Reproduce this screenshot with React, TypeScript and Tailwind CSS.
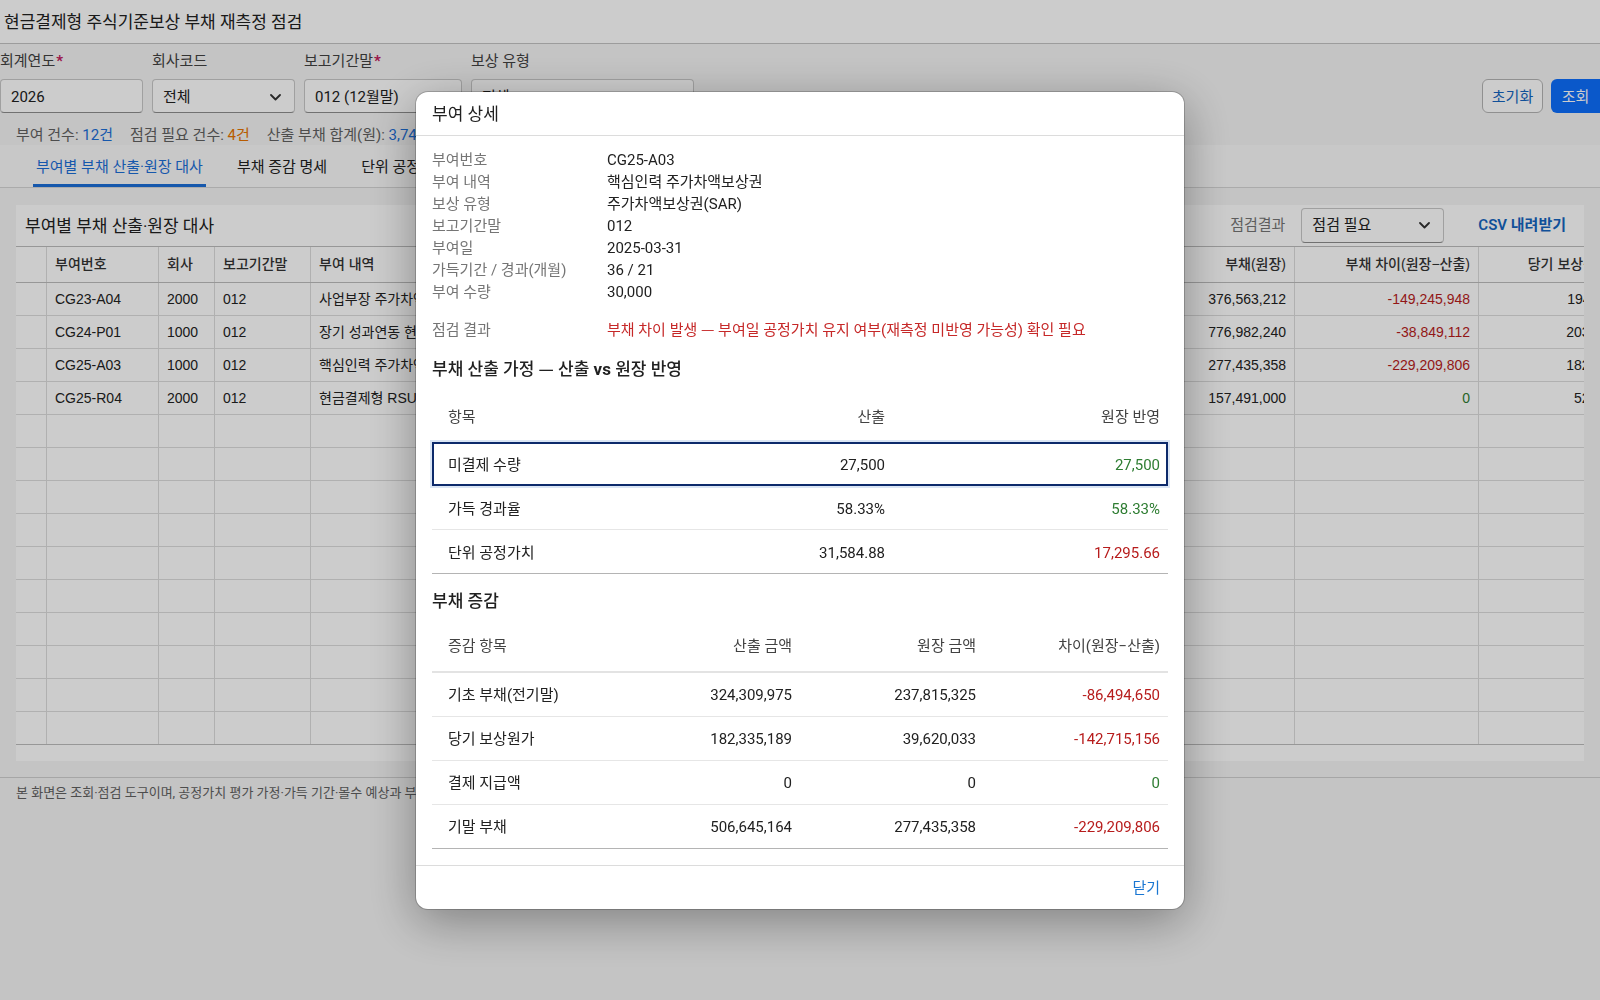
import type { ReactNode } from "react";

const gridCols =
  "grid w-[1637px] grid-cols-[31px_112px_56px_96px_220px_120px_100px_100px_130px_150px_164px_184px_174px]";

type GrantRow = {
  id: string;
  company: string;
  period: string;
  desc: string;
  type: string;
  grantDate: string;
  qty: string;
  fv: string;
  calc: string;
  ledger: string;
  diff: string;
  cost: string;
};

const grants: GrantRow[] = [
  {
    id: "CG23-A04",
    company: "2000",
    period: "012",
    desc: "사업부장 주가차액보상권",
    type: "SAR",
    grantDate: "2023-04-01",
    qty: "18,000",
    fv: "29,211.62",
    calc: "525,809,160",
    ledger: "376,563,212",
    diff: "-149,245,948",
    cost: "194,118,552",
  },
  {
    id: "CG24-P01",
    company: "1000",
    period: "012",
    desc: "장기 성과연동 현금보상",
    type: "PSU",
    grantDate: "2024-03-29",
    qty: "42,000",
    fv: "19,424.97",
    calc: "815,831,352",
    ledger: "776,982,240",
    diff: "-38,849,112",
    cost: "203,447,810",
  },
  {
    id: "CG25-A03",
    company: "1000",
    period: "012",
    desc: "핵심인력 주가차액보상권",
    type: "SAR",
    grantDate: "2025-03-31",
    qty: "27,500",
    fv: "31,584.88",
    calc: "506,645,164",
    ledger: "277,435,358",
    diff: "-229,209,806",
    cost: "182,335,189",
  },
  {
    id: "CG25-R04",
    company: "2000",
    period: "012",
    desc: "현금결제형 RSU",
    type: "RSU",
    grantDate: "2025-06-30",
    qty: "12,500",
    fv: "12,599.28",
    calc: "157,491,000",
    ledger: "157,491,000",
    diff: "0",
    cost: "52,497,000",
  },
];

function Chevron() {
  return (
    <svg width="11" height="7" viewBox="0 0 11 7" fill="none" className="shrink-0">
      <path d="M1 1l4.5 4.5L10 1" stroke="#333" strokeWidth="1.8" strokeLinecap="round" strokeLinejoin="round" />
    </svg>
  );
}

function Dash() {
  return <span className="font-[family-name:'Noto_Sans_CJK_KR',sans-serif] leading-[0]">—</span>;
}

function Field({ label, required, children }: { label: string; required?: boolean; children: ReactNode }) {
  return (
    <div className="flex flex-col">
      <div className="mb-2 text-[15px] leading-5 text-[#424242]">
        {label}
        {required ? <span className="ml-px font-bold text-[#c2185b]">*</span> : null}
      </div>
      {children}
    </div>
  );
}

function Box({ className, value, select }: { className: string; value: string; select?: boolean }) {
  return (
    <div
      className={`flex h-[34px] items-center justify-between rounded border border-[#c9c9c9] border-b-[#8e8e8e] bg-white pl-2.5 pr-[13px] pt-[2px] text-[15px] text-[#212121] ${className}`}
    >
      <span>{value}</span>
      {select ? <Chevron /> : null}
    </div>
  );
}

function Cell({ children, right, className = "" }: { children?: ReactNode; right?: boolean; className?: string }) {
  return (
    <div
      className={`flex items-center overflow-hidden whitespace-nowrap border-r border-[#dcdcdc] px-2 ${right ? "justify-end" : ""} ${className}`}
    >
      {children}
    </div>
  );
}

function diffColor(v: string) {
  return v === "0" ? "text-[#2e7d32]" : "text-[#b71c1c]";
}

function GrantGrid() {
  const empty = Array.from({ length: 10 });
  return (
    <div className="overflow-hidden font-[family-name:'Liberation_Sans','Noto_Sans_CJK_KR',sans-serif]">
      <div className={`${gridCols} h-[36px] border-b border-[#bdbdbd] text-[14px] font-medium text-[#333]`}>
        <Cell />
        <Cell>부여번호</Cell>
        <Cell>회사</Cell>
        <Cell>보고기간말</Cell>
        <Cell>부여 내역</Cell>
        <Cell>보상 유형</Cell>
        <Cell>부여일</Cell>
        <Cell right>미결제 수량</Cell>
        <Cell right>단위 공정가치</Cell>
        <Cell right>부채(산출)</Cell>
        <Cell right>부채(원장)</Cell>
        <Cell right>부채 차이(원장−산출)</Cell>
        <Cell right>당기 보상원가(산출)</Cell>
      </div>
      {grants.map((g) => (
        <div key={g.id} className={`${gridCols} h-[33px] border-b border-[#dcdcdc] text-[14px] text-[#222]`}>
          <Cell />
          <Cell>{g.id}</Cell>
          <Cell>{g.company}</Cell>
          <Cell>{g.period}</Cell>
          <Cell>{g.desc}</Cell>
          <Cell>{g.type}</Cell>
          <Cell>{g.grantDate}</Cell>
          <Cell right>{g.qty}</Cell>
          <Cell right>{g.fv}</Cell>
          <Cell right>{g.calc}</Cell>
          <Cell right>{g.ledger}</Cell>
          <Cell right className={diffColor(g.diff)}>
            {g.diff}
          </Cell>
          <Cell right>{g.cost}</Cell>
        </div>
      ))}
      {empty.map((_, i) => (
        <div
          key={i}
          className={`${gridCols} h-[33px] border-b ${i === empty.length - 1 ? "border-[#bdbdbd]" : "border-[#dcdcdc]"}`}
        >
          {Array.from({ length: 13 }).map((__, j) => (
            <Cell key={j} />
          ))}
        </div>
      ))}
    </div>
  );
}

const details: [string, string][] = [
  ["부여번호", "CG25-A03"],
  ["부여 내역", "핵심인력 주가차액보상권"],
  ["보상 유형", "주가차액보상권(SAR)"],
  ["보고기간말", "012"],
  ["부여일", "2025-03-31"],
  ["가득기간 / 경과(개월)", "36 / 21"],
  ["부여 수량", "30,000"],
];

const assumptions = [
  { item: "미결제 수량", calc: "27,500", ledger: "27,500", ok: true },
  { item: "가득 경과율", calc: "58.33%", ledger: "58.33%", ok: true },
  { item: "단위 공정가치", calc: "31,584.88", ledger: "17,295.66", ok: false },
];

const movements = [
  { item: "기초 부채(전기말)", calc: "324,309,975", ledger: "237,815,325", diff: "-86,494,650" },
  { item: "당기 보상원가", calc: "182,335,189", ledger: "39,620,033", diff: "-142,715,156" },
  { item: "결제 지급액", calc: "0", ledger: "0", diff: "0" },
  { item: "기말 부채", calc: "506,645,164", ledger: "277,435,358", diff: "-229,209,806" },
];

function GrantDialog() {
  return (
    <div className="fixed inset-0 flex items-center justify-center bg-black/20">
      <div className="flex w-[768px] flex-col overflow-hidden rounded-xl bg-white shadow-[0_12px_48px_rgba(0,0,0,0.35)] ring-1 ring-black/20">
        <div className="flex h-[44px] items-center border-b border-[#dcdcdc] px-4 pt-[4px] text-[17px] text-[#212121]">
          부여 상세
        </div>

        <div className="px-4 pb-4 pt-[13px] text-[15px] text-[#212121]">
          <dl className="grid grid-cols-[175px_1fr] leading-[22px]">
            {details.map(([k, v]) => (
              <div key={k} className="contents">
                <dt className="text-[#757575]">{k}</dt>
                <dd>{v}</dd>
              </div>
            ))}
          </dl>
          <div className="mt-4 grid h-[22px] grid-cols-[175px_1fr] leading-[22px]">
            <span className="text-[#757575]">점검 결과</span>
            <span className="text-[#c62828]">
              부채 차이 발생 <Dash /> 부여일 공정가치 유지 여부(재측정 미반영 가능성) 확인 필요
            </span>
          </div>

          <h3 className="mt-4 h-6 text-[17px] font-medium leading-6">
            부채 산출 가정 <Dash /> 산출 <b className="font-bold">vs</b> 원장 반영
          </h3>
          <div className="mt-[10px]">
            <div className="grid h-[51px] grid-cols-[1fr_240px_275px] items-center border-b-2 border-[#e3e3e3] pt-[4px] text-[#424242]">
              <span className="pl-4">항목</span>
              <span className="pr-2 text-right">산출</span>
              <span className="pr-2 text-right">원장 반영</span>
            </div>
            {assumptions.map((r, i) => (
              <div
                key={r.item}
                className={`grid h-[44px] grid-cols-[1fr_240px_275px] items-center border-b pt-[4px] ${
                  i === assumptions.length - 1 ? "border-[#b4b4b4]" : "border-[#e6e6e6]"
                } ${i === 0 ? "shadow-[0_0_0_2px_#dbe6f5] outline-2 -outline-offset-2 outline-[#0d2a6b]" : ""}`}
              >
                <span className="pl-4">{r.item}</span>
                <span className="pr-2 text-right">{r.calc}</span>
                <span className={`pr-2 text-right ${r.ok ? "text-[#2e7d32]" : "text-[#b71c1c]"}`}>{r.ledger}</span>
              </div>
            ))}
          </div>

          <h3 className="mt-[15px] text-[17px] font-medium leading-6">부채 증감</h3>
          <div className="mt-[9px]">
            <div className="grid h-[51px] grid-cols-4 items-center border-b-2 border-[#e3e3e3] text-[#424242]">
              <span className="pl-4">증감 항목</span>
              <span className="pr-2 text-right">산출 금액</span>
              <span className="pr-2 text-right">원장 금액</span>
              <span className="pr-2 text-right">차이(원장−산출)</span>
            </div>
            {movements.map((r, i) => (
              <div
                key={r.item}
                className={`grid h-[44px] grid-cols-4 items-center border-b pt-[3px] ${
                  i === movements.length - 1 ? "border-[#b4b4b4]" : "border-[#e6e6e6]"
                }`}
              >
                <span className="pl-4">{r.item}</span>
                <span className="pr-2 text-right">{r.calc}</span>
                <span className="pr-2 text-right">{r.ledger}</span>
                <span className={`pr-2 text-right ${diffColor(r.diff)}`}>{r.diff}</span>
              </div>
            ))}
          </div>
        </div>

        <div className="flex h-[44px] items-center justify-end border-t border-[#dcdcdc] px-4 pt-[2px]">
          <button className="px-2 py-1 text-[15px] text-[#1976d2]">닫기</button>
        </div>
      </div>
    </div>
  );
}

export default function App() {
  return (
    <div className="relative min-h-screen w-full overflow-hidden bg-[#f5f5f5] font-[family-name:'Roboto','Noto_Sans_CJK_KR',sans-serif] text-[#212121]">
      <header className="flex h-[44px] items-center border-b border-[#c4c4c4] bg-white pl-1 pt-[2px]">
        <h1 className="text-[17px] font-normal">현금결제형 주식기준보상 부채 재측정 점검</h1>
      </header>

      <section className="pt-[7px]">
        <div className="flex items-end">
          <div className="flex gap-[9px]">
            <Field label="회계연도" required>
              <Box className="w-[143px]" value="2026" />
            </Field>
            <Field label="회사코드">
              <Box className="w-[143px]" value="전체" select />
            </Field>
            <Field label="보고기간말" required>
              <Box className="w-[158px]" value="012 (12월말)" select />
            </Field>
            <Field label="보상 유형">
              <Box className="w-[223px]" value="전체" select />
            </Field>
          </div>
          <div className="ml-auto flex gap-2">
            <button className="h-[34px] w-[61px] rounded-md border border-[#b5b5b5] bg-white pt-[2px] text-[15px] text-[#1565c0]">
              초기화
            </button>
            <button className="h-[34px] w-[49px] rounded-l-md bg-[#0d6efd] pt-[2px] text-[15px] text-white">조회</button>
          </div>
        </div>
        <div className="mt-[12px] flex h-5 items-center gap-[17px] pl-4 text-[15px] text-[#616161]">
          <span>
            부여 건수: <span className="text-[#1c6fd8]">12건</span>
          </span>
          <span>
            점검 필요 건수: <span className="text-[#e67300]">4건</span>
          </span>
          <span>
            산출 부채 합계(원): <span className="text-[#1c6fd8]">3,741,862,517</span>
          </span>
        </div>
      </section>

      <nav className="flex h-[43px] items-stretch gap-[28px] border-b border-[#d6d6d6] bg-[#fbfbfb] pl-[33px] text-[15px]">
        <div className="flex items-center border-y-[3px] border-t-transparent border-b-[#1c6fd8] px-[3px] pt-[2px] text-[#1c6fd8]">
          부여별 부채 산출·원장 대사
        </div>
        <div className="flex items-center border-y-[3px] border-transparent px-[3px] pt-[2px]">부채 증감 명세</div>
        <div className="flex items-center border-y-[3px] border-transparent px-[3px] pt-[2px]">단위 공정가치 산출 근거</div>
      </nav>

      <main className="px-4 pt-[17px]">
        <div className="overflow-hidden bg-white pb-4">
          <div className="flex h-[42px] items-center border-b border-[#bdbdbd] pl-[9px] pr-[2px]">
            <h2 className="pt-[2px] text-[17px] text-[#212121]">부여별 부채 산출·원장 대사</h2>
            <div className="ml-auto flex items-center">
              <span className="text-[15px] text-[#757575]">점검결과</span>
              <div className="ml-4 flex h-[35px] w-[143px] items-center justify-between rounded border border-[#c9c9c9] border-b-[#8e8e8e] bg-white pl-2.5 pr-[13px] text-[15px]">
                <span>점검 필요</span>
                <Chevron />
              </div>
              <button className="ml-[18px] px-4 text-[15px] font-semibold text-[#1565c0]">CSV 내려받기</button>
            </div>
          </div>
          <GrantGrid />
        </div>
      </main>

      <footer className="mt-4 border-t border-[#d0d0d0] pl-4 pt-1.5 text-[13px] leading-[18px] text-[#616161]">
        본 화면은 조회·점검 도구이며, 공정가치 평가 가정·가득 기간·몰수 예상과 부채 재측정 결과는 회계 담당자가 원장 및
        평가 보고서와 대조하여 확정합니다.
      </footer>

      <GrantDialog />
    </div>
  );
}
